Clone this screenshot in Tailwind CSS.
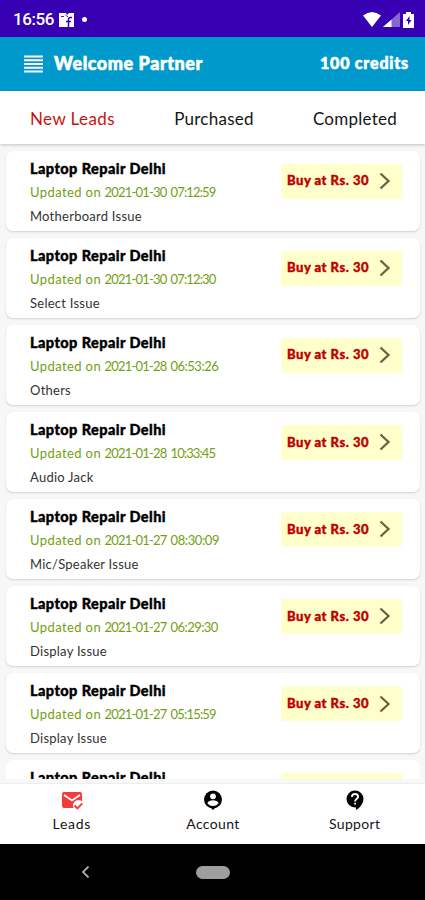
<!DOCTYPE html>
<html lang="en">
<head>
<meta charset="utf-8">
<title>Partner Leads</title>
<script src="https://cdn.jsdelivr.net/npm/@tailwindcss/browser@4"></script>
</head>
<body class="w-[425px] h-[900px] overflow-hidden flex flex-col bg-[#f7f7f7] text-[#151515] font-['Lato',sans-serif] whitespace-nowrap">
<div class="h-[37px] shrink-0 bg-[#3700b3] flex items-center text-white pl-[13px] pr-[10px] pt-[2px]">
  <span class="font-['Roboto',sans-serif] font-medium text-[17px] w-[41px] tracking-[-0.4px]">16:56</span>
  <svg class="ml-[5px] w-[15px] h-[14px]" viewBox="0 0 15 14"><path fill="#fff" d="M0 0h7l1 2 2-2h5v14H0z"/><path d="M13 4.500h-1.500q-2 0-2 2V14M7 8.500h5" fill="none" stroke="#3700b3" stroke-width="1.500"/><path d="M2 3.500h3M6.500 2L9 4" stroke="#3700b3" fill="none" stroke-width=".9"/></svg>
  <span class="ml-[8px] w-[5px] h-[5px] rounded-full bg-white"></span>
  <svg class="ml-auto w-[52px] h-[16px]" viewBox="0 0 52 16"><path fill="#fff" d="M0 3.500Q9-3.500 18 3.500L9 15z"/><path fill="#fff" fill-opacity=".4" d="M37 0v15H20z"/><path fill="#fff" d="M28.500 7.500V15H20z"/><path fill="#fff" d="M40 2h3V0h5v2h3v14H40z"/><path fill="#3700b3" d="M46.500 4l-3.500 5h2v4l3.500-5h-2z"/></svg>
</div>
<header class="h-[54px] shrink-0 bg-[#0099cc] flex items-center text-white pl-[24px] pr-[16px] pb-[3px] font-black">
  <svg class="w-[19px] h-[18px] mt-[3px]" viewBox="0 0 19 18"><path d="M0 1.500h19M0 5.200h19M0 9h19M0 12.800h19M0 16.500h19" stroke="#fff" stroke-width="1.900"/></svg>
  <span class="ml-[11px] mt-[2px] text-[18px] tracking-[0.55px] [-webkit-text-stroke:0.6px_white]">Welcome Partner</span>
  <span class="ml-auto text-[16px] tracking-[0.8px] [-webkit-text-stroke:0.6px_white]">100 credits</span>
</header>
<nav class="h-[53px] shrink-0 bg-white flex items-center justify-between pl-[30px] pr-[28px] pt-[3px] text-[17px] relative shadow-[0_1px_3px_rgba(0,0,0,0.22)]">
  <span class="text-[#cc1111] tracking-[0.4px]">New Leads</span><span class="tracking-[0.25px]">Purchased</span><span class="tracking-[0.25px]">Completed</span>
</nav>
<main id="leads" class="h-[635px] shrink-0 overflow-hidden pt-[6.500px] pl-[6px] pr-[5px] flex flex-col gap-[7px]"></main>
<footer class="h-[65px] shrink-0 bg-white border-t-4 border-[#f8f8f8] grid grid-cols-3 text-[14px] shadow-[inset_0_1px_0_#eeeeee]">
  <div class="flex flex-col items-center pt-[7px] pl-[2px]">
    <svg class="w-[22px] h-[20px]" viewBox="0 0 22 20"><rect x="1" y="2" width="20" height="16" rx="2" fill="#f23b3b"/><path d="M3 5l8 5.500L19 5" fill="none" stroke="#fff" stroke-width="1.700"/><circle cx="17.500" cy="15.500" r="5.500" fill="#fff"/><path d="M13.500 15.500l2.800 2.800 5-5" fill="none" stroke="#f23b3b" stroke-width="1.900"/></svg>
    <span class="mt-[3px] tracking-[0.75px]">Leads</span>
  </div>
  <div class="flex flex-col items-center pt-[7px] pl-[1px]">
    <svg class="w-[20px] h-[20px]" viewBox="0 0 20 20"><path fill="#000" d="M7.500 17.500L10 20l2.500-2.500z"/><circle cx="10" cy="9.500" r="9" fill="#000"/><circle cx="10" cy="6.300" r="2.900" fill="#fff"/><path fill="#fff" d="M4.300 13q1.700-2.700 5.700-2.700t5.700 2.700q-2 3-5.700 3t-5.700-3z"/></svg>
    <span class="mt-[3px] tracking-[0.35px]">Account</span>
  </div>
  <div class="flex flex-col items-center pt-[7px] pl-[1px]">
    <svg class="w-[20px] h-[20px]" viewBox="0 0 20 20"><circle cx="10" cy="9" r="8.500" fill="#000"/><path fill="#000" d="M11 16v4q5-3 6.500-7.500z"/><path d="M6.900 7q0-3 3.100-3t3.100 2.700c0 2-3 2.300-3 4.800" fill="none" stroke="#fff" stroke-width="1.800"/><path d="M9.200 12.700H11v1.900H9.200z" fill="#fff"/></svg>
    <span class="mt-[3px] tracking-[0.35px]">Support</span>
  </div>
</footer>
<div class="h-[56px] shrink-0 bg-black grid grid-cols-[81px_115px_34px] items-center">
  <span></span>
  <svg class="w-[9px] h-[14px]" viewBox="0 0 9 14"><path d="M7.500 1.500L2 7l5.500 5.500" fill="none" stroke="#aaa" stroke-width="1.800"/></svg>
  <span class="h-[13px] rounded-full bg-[#9e9e9e]"></span>
</div>
<script>
const leads = [
  ["2021-01-30", "07:12:59", "Motherboard Issue"],
  ["2021-01-30", "07:12:30", "Select Issue"],
  ["2021-01-28", "06:53:26", "Others"],
  ["2021-01-28", "10:33:45", "Audio Jack"],
  ["2021-01-27", "08:30:09", "Mic/Speaker Issue"],
  ["2021-01-27", "06:29:30", "Display Issue"],
  ["2021-01-27", "05:15:59", "Display Issue"]
];
const timeTracking = ["tracking-[-0.85px]", "tracking-[-0.85px]", "tracking-[-0.5px]", "tracking-[-0.9px]", "tracking-[-0.4px]", "tracking-[-0.55px]", "tracking-[-0.8px]"];
const title = `<h2 class="font-black text-[14.500px] leading-[22px] tracking-[0.43px] text-black [-webkit-text-stroke:0.4px_black]">Laptop Repair Delhi</h2>`;
document.getElementById("leads").innerHTML = leads.map(([date, time, issue], i) => `
  <article class="h-[80.100px] shrink-0 bg-white rounded-[7px] shadow-[0_1px_2px_rgba(0,0,0,0.16)] flex justify-between pl-[24px] pr-[18px] pt-[7px]">
    <div>
      ${title}
      <p class="text-[13px] leading-[25px] text-[#729f12] flex"><span class="w-[74.500px] tracking-[0.4px]">Updated on</span><span class="w-[66px] tracking-[-0.8px]">${date}</span><span class="${timeTracking[i]}">${time}</span></p>
      <p class="text-[13px] leading-[23px] text-[#333] tracking-[0.25px]">${issue}</p>
    </div>
    <div class="mt-[6px] w-[121px] h-[35px] rounded-[3px] bg-[#ffffcc] flex items-center justify-between pl-[6px] pr-[11px] text-[#c00000] font-black text-[13px]">
      <span class="tracking-[0.5px] [-webkit-text-stroke:0.4px_#c00000]">Buy at Rs. 30</span>
      <svg class="w-[12px] h-[18px]" viewBox="0 0 12 18"><path d="M1.500 1.500L9.500 9l-8 7.500" fill="none" stroke="#666644" stroke-width="2.300"/></svg>
    </div>
  </article>`).join("") + `
  <article class="h-[19px] shrink-0 overflow-hidden bg-white rounded-t-[7px] flex justify-between pl-[24px] pr-[18px] pt-[7px]">
    ${title}
    <div class="mt-[6px] w-[121px] h-[6px] rounded-t-[3px] bg-[#ffffcc]"></div>
  </article>`;
</script>
</body>
</html>
